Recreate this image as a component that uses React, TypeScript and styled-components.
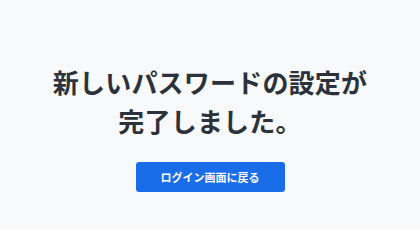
import styled, { createGlobalStyle } from 'styled-components'

const GlobalStyle = createGlobalStyle`
  html, body {
    margin: 0;
    padding: 0;
    background: #f8f9fa;
  }
  body {
    font-family: "Noto Sans CJK JP", "Noto Sans", sans-serif;
  }
`

const Page = styled.div`
  display: flex;
  flex-direction: column;
  align-items: center;
  height: 229px;
  box-sizing: border-box;
  padding-top: 62px;
`

const Title = styled.h1`
  margin: 0;
  font-size: 26px;
  line-height: 39px;
  font-weight: 700;
  color: #2b323b;
  text-align: center;
  letter-spacing: 0.2px;
`

const Button = styled.button`
  margin-top: 22px;
  width: 149px;
  height: 30px;
  border: none;
  border-radius: 3px;
  background: #1a6de8;
  color: #ffffff;
  font-family: inherit;
  font-size: 11px;
  font-weight: 700;
  cursor: pointer;
`

const App = () => {
  return (
    <>
      <GlobalStyle />
      <Page>
        <Title>
          新しいパスワードの設定が
          <br />
          完了しました。
        </Title>
        <Button>ログイン画面に戻る</Button>
      </Page>
    </>
  )
}

export default App
